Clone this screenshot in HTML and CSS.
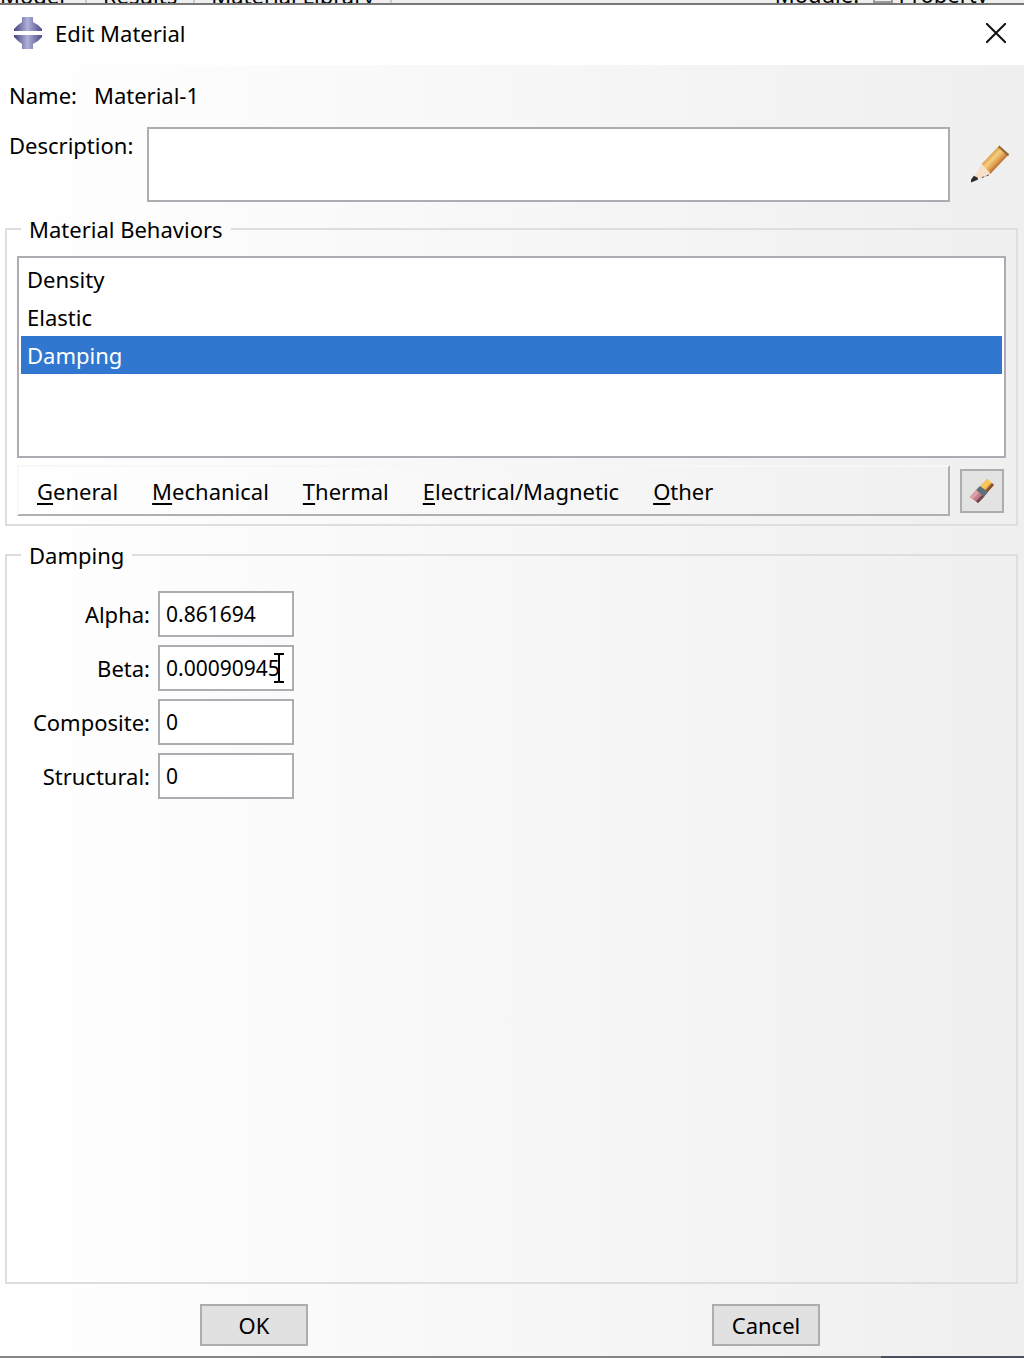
FILE: index.html
```html
<!DOCTYPE html>
<html lang="en">
<head>
<meta charset="utf-8">
<meta name="viewport" content="width=device-width, initial-scale=1">
<title>Edit Material</title>
<link rel="stylesheet" href="styles.css">
</head>
<body>
<div class="backdrop-top">
  <span class="tab tab-model">Model</span>
  <span class="tab tab-results">Results</span>
  <span class="tab tab-library">Material Library</span>
  <span class="module">Module: <span class="module-box"></span> Property</span>
</div>
<main class="dialog">
  <header class="titlebar">
    <svg class="app-icon" viewBox="0 0 30 32" aria-hidden="true">
      <defs>
        <linearGradient id="steel" x1="0" x2="1"><stop offset="0" stop-color="#45457f"/><stop offset=".48" stop-color="#b0b0da"/><stop offset="1" stop-color="#4c4c88"/></linearGradient>
      </defs>
      <path d="M9 0h11v5l5 3 4 4v2H1v-2l4-4 4-3z" fill="url(#steel)"/>
      <path d="M1 18h28v2l-4 4-5 3v5H9v-5l-4-3-4-4z" fill="url(#steel)"/>
    </svg>
    <h1 class="title">Edit Material</h1>
    <button class="close" type="button" aria-label="Close">
      <svg viewBox="0 0 20 20" aria-hidden="true"><path d="M0 0L20 20M20 0L0 20" stroke="#111" stroke-width="2"/></svg>
    </button>
  </header>
  <form class="content">
    <div class="name-row"><span>Name:</span><span>Material-1</span></div>
    <div class="description-row">
      <label for="description">Description:</label>
      <textarea id="description"></textarea>
      <button class="pencil" type="button" aria-label="Edit description">
        <svg viewBox="0 0 40 40" aria-hidden="true">
          <defs><linearGradient id="wood" x1=".3" y1=".3" x2=".7" y2=".7"><stop offset="0" stop-color="#d9973f"/><stop offset=".35" stop-color="#f5cf80"/><stop offset=".65" stop-color="#e0a04f"/><stop offset="1" stop-color="#a9582f"/></linearGradient></defs>
          <path d="M12 19L30 0l10 9-19 20z" fill="url(#wood)"/>
          <path d="M30 0l10 9-1 2-10-9z" fill="#8d6a3a"/>
          <path d="M12 19l9 10-13 5-3-3z" fill="#f8dfc8"/>
          <path d="M12 33l8-3 1-2" fill="none" stroke="#6b4a3a" stroke-dasharray="3 2"/>
          <path d="M4 31l4 2v2l-7 3 0-3z" fill="#2b2b2b"/>
        </svg>
      </button>
    </div>
    <fieldset class="group behaviors">
      <legend>Material Behaviors</legend>
      <select class="list" size="5" aria-label="Material Behaviors">
        <option>Density</option>
        <option>Elastic</option>
        <option selected>Damping</option>
      </select>
      <div class="menu-row">
        <nav class="menu">
          <button type="button"><u>G</u>eneral</button>
          <button type="button"><u>M</u>echanical</button>
          <button type="button"><u>T</u>hermal</button>
          <button type="button"><u>E</u>lectrical/Magnetic</button>
          <button type="button"><u>O</u>ther</button>
        </nav>
        <button class="eraser" type="button" aria-label="Delete behavior">
          <svg viewBox="0 0 28 28" aria-hidden="true">
            <path d="M19 2l7 6L10 26l-8-6z" fill="#e9aa3e"/>
            <path d="M19 2l4 3L13 16l-4-3z" fill="#f7c75c"/>
            <path d="M26 8l-2-2L8 24l2 2z" fill="#86513a"/>
            <path d="M12 9l8 6-4 5-8-7z" fill="#5d7079"/>
            <path d="M8 13l8 7-6 6-8-6z" fill="#c47f8b"/>
            <path d="M16 20l-2-2-6 6 2 2z" fill="#744650"/>
            <path d="M8 13l3 3-6 6-3-2z" fill="#dda0a8"/>
          </svg>
        </button>
      </div>
    </fieldset>
    <fieldset class="group damping">
      <legend>Damping</legend>
      <div class="fields">
        <label for="alpha">Alpha:</label>
        <input id="alpha" type="text" value="0.861694">
        <label for="beta">Beta:</label>
        <div class="pointed">
          <input id="beta" type="text" value="0.00090945">
          <svg class="ibeam" viewBox="0 0 10 30" aria-hidden="true"><path d="M0 1h4l1 1 1-1h4M5 1v28M0 29h4l1-1 1 1h4" fill="none" stroke="#000" stroke-width="2"/></svg>
        </div>
        <label for="composite">Composite:</label>
        <input id="composite" type="text" value="0">
        <label for="structural">Structural:</label>
        <input id="structural" type="text" value="0">
      </div>
    </fieldset>
    <div class="actions">
      <button type="button">OK</button>
      <button type="button">Cancel</button>
    </div>
  </form>
</main>
<div class="backdrop-bottom"></div>
</body>
</html>
```
FILE: styles.css
```css
* { box-sizing: border-box; }

body {
  margin: 0;
  min-height: 100vh;
  display: flex;
  flex-direction: column;
  font: 22px/28px "Noto Sans", "Open Sans", sans-serif;
  color: #000;
}

button, input, textarea, select { font: inherit; color: inherit; margin: 0; }
button { padding: 0; border: 0; background: none; }
svg { display: block; }

/* slivers of the main window around the dialog */
.backdrop-top {
  display: flex;
  align-items: flex-end;
  height: 5px;
  overflow: hidden;
  border-bottom: 2px solid #777;
  background: #eee;
  line-height: 16px;
  white-space: nowrap;
}
.tab { padding: 0 16px; border-right: 2px solid #ccc; }
.tab-model { padding: 0 20px 0 0; }
.module { margin: 0 36px 0 auto; }
.module-box { display: inline-block; width: 20px; height: 12px; margin-left: 8px; border: 2px solid #999; }
.backdrop-bottom { height: 2px; background: linear-gradient(90deg, #858585 86%, #4a5060 86%); }

.dialog { flex: 1; display: flex; flex-direction: column; }

.titlebar {
  display: flex;
  align-items: center;
  height: 60px;
  padding: 0 18px 4px 13px;
  background: #fff;
}
.app-icon { width: 30px; height: 32px; }
.title { margin: 0 auto 0 12px; font-size: 22px; font-weight: 400; }
.close svg { width: 20px; height: 20px; }

.content {
  flex: 1;
  display: flex;
  flex-direction: column;
  padding: 16px 6px 10px 5px;
  background: linear-gradient(90deg, #fff, #efefef);
}

.name-row { display: flex; gap: 17px; padding-left: 4px; }
.description-row { display: flex; gap: 14px; margin-top: 18px; padding-left: 4px; }
.description-row label { width: 124px; padding-top: 4px; white-space: nowrap; }
.description-row textarea {
  flex: 1;
  height: 75px;
  padding: 6px;
  border: 2px solid #acacb2;
  background: #fff;
  resize: none;
}
.pencil { align-self: center; margin: 0 9px 0 6px; }
.pencil svg { width: 39px; height: 40px; }

.group { min-width: 0; margin: 0; border: 2px solid #dedede; }
.group legend { margin-left: 4px; padding: 0 8px; }

.behaviors { margin-top: 13px; padding: 13px 10px 8px; }
.list {
  display: block;
  width: 100%;
  height: 202px;
  padding: 2px;
  border: 2px solid #acacb2;
  border-radius: 0;
  background: #fff;
  overflow: hidden;
  outline: 0;
}
.list option { height: 38px; min-height: 38px; padding: 4px 6px 0; }
.list option:checked { background: #3177d0 linear-gradient(#3177d0, #3177d0); color: #fff; }

.menu-row { display: flex; align-items: center; gap: 10px; margin-top: 7px; padding-right: 2px; }
.menu {
  flex: 1;
  display: flex;
  gap: 34px;
  height: 51px;
  padding: 0 18px;
  border: 2px solid #f5f7fb;
  border-right-color: #b0b0b0;
  border-bottom-color: #b0b0b0;
}
.menu u { text-underline-offset: 3px; text-decoration-thickness: 2px; text-decoration-skip-ink: none; }
.eraser {
  display: grid;
  place-items: center;
  width: 44px;
  height: 44px;
  border: 2px solid #adadad;
  background: #e3e3e3;
}
.eraser svg { width: 28px; height: 28px; }

.damping { flex: 1; margin-top: 15px; padding: 22px 10px; }
.fields {
  display: grid;
  grid-template-columns: 133px 136px;
  gap: 8px;
  align-items: center;
}
.fields label { text-align: right; }
.fields input {
  display: block;
  width: 100%;
  height: 46px;
  padding: 0 6px;
  border: 2px solid #acacb2;
  border-radius: 0;
  background: #fff;
  font-size: 21px;
}
.pointed { position: relative; }
.ibeam { position: absolute; right: 10px; top: 8px; width: 10px; height: 30px; }

.actions { display: grid; grid-template-columns: 1fr 1fr; justify-items: center; margin: 20px -4px 0 -7px; }
.actions button { width: 108px; height: 42px; border: 2px solid #adadad; background: #e1e1e1; }
```
